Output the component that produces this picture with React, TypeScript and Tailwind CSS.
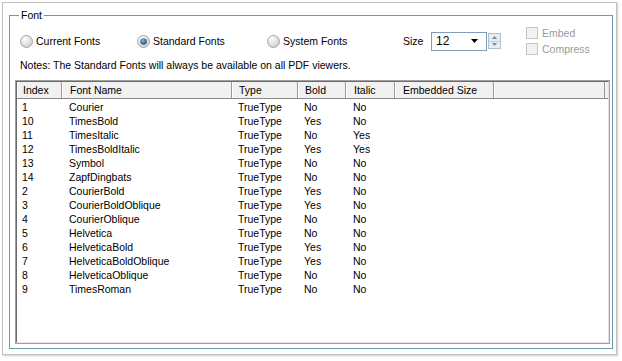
import React from "react";

const rows: [string, string, string, string, string][] = [
  ["1", "Courier", "TrueType", "No", "No"],
  ["10", "TimesBold", "TrueType", "Yes", "No"],
  ["11", "TimesItalic", "TrueType", "No", "Yes"],
  ["12", "TimesBoldItalic", "TrueType", "Yes", "Yes"],
  ["13", "Symbol", "TrueType", "No", "No"],
  ["14", "ZapfDingbats", "TrueType", "No", "No"],
  ["2", "CourierBold", "TrueType", "Yes", "No"],
  ["3", "CourierBoldOblique", "TrueType", "Yes", "No"],
  ["4", "CourierOblique", "TrueType", "No", "No"],
  ["5", "Helvetica", "TrueType", "No", "No"],
  ["6", "HelveticaBold", "TrueType", "Yes", "No"],
  ["7", "HelveticaBoldOblique", "TrueType", "Yes", "No"],
  ["8", "HelveticaOblique", "TrueType", "No", "No"],
  ["9", "TimesRoman", "TrueType", "No", "No"],
];

const cols = [
  { label: "Index", w: "w-[45px]", pl: "pl-[5px]" },
  { label: "Font Name", w: "w-[170px]", pl: "pl-[7px]" },
  { label: "Type", w: "w-[66px]", pl: "pl-[6px]" },
  { label: "Bold", w: "w-[48px]", pl: "pl-[6px]" },
  { label: "Italic", w: "w-[49px]", pl: "pl-[7px]" },
  { label: "Embedded Size", w: "w-[99px]", pl: "pl-[7px]" },
];

function Radio({ checked }: { checked?: boolean }) {
  return (
    <svg width="13" height="13" viewBox="0 0 13 13" className="shrink-0">
      <defs>
        <radialGradient id="rg" cx="0.35" cy="0.3" r="0.8">
          <stop offset="0" stopColor="#ffffff" />
          <stop offset="1" stopColor="#c8c8c8" />
        </radialGradient>
        <radialGradient id="dot" cx="0.4" cy="0.35" r="0.7">
          <stop offset="0" stopColor="#7fb4d8" />
          <stop offset="1" stopColor="#1f4f78" />
        </radialGradient>
      </defs>
      <circle cx="6.5" cy="6.5" r="6" fill="url(#rg)" stroke="#a6a6a6" />
      {checked && <circle cx="6.5" cy="6.5" r="3.3" fill="url(#dot)" />}
    </svg>
  );
}

function RadioItem({ label, w, checked }: { label: string; w: string; checked?: boolean }) {
  return (
    <div className={`flex items-center gap-[3px] ${w}`}>
      <Radio checked={checked} />
      <span>{label}</span>
    </div>
  );
}

function Check({ label }: { label: string }) {
  return (
    <div className="flex h-[16px] items-center gap-[4px] text-[#9a9a9a]">
      <div className="h-[12px] w-[12px] border border-[#c4c4c4] bg-[#f2f2f2]" />
      <span>{label}</span>
    </div>
  );
}

export default function App() {
  return (
    <div
      className="h-[361px] w-[622px] bg-white text-[10.5px] leading-[13px] text-black"
      style={{ fontFamily: '"Liberation Sans", Arial, sans-serif' }}
    >
      <div className="ml-[2px] mt-[2px] h-[353px] w-[615px] border border-[#c2c2c2] bg-white shadow-[1px_1px_2px_rgba(0,0,0,0.2)]">
        <div className="relative ml-[6px] mt-[12px] flex h-[334px] w-[604px] flex-col border border-[#6f98ac]">
          <span className="absolute left-[9px] top-[-7px] bg-white px-[2px]">Font</span>

          <div className="mt-[10px] flex h-[30px] items-center pl-[10px]">
            <RadioItem label="Current Fonts" w="w-[117px]" />
            <RadioItem label="Standard Fonts" w="w-[130px]" checked />
            <RadioItem label="System Fonts" w="w-[136px]" />
            <span className="w-[28px]">Size</span>
            <div className="flex h-[19px] w-[56px] items-center justify-between border border-[#7f9db9] bg-white pl-[4px] pr-[8px]">
              <span className="text-[12px]">12</span>
              <svg width="7" height="4" viewBox="0 0 7 4">
                <path d="M0 0h7L3.5 4z" fill="#000" />
              </svg>
            </div>
            <div className="ml-[1px] flex h-[16px] w-[13px] flex-col border border-[#b4c0cc] bg-[#e6ecf2]">
              <div className="flex flex-1 items-center justify-center border-b border-[#c4ced8]">
                <svg width="5" height="3" viewBox="0 0 5 3">
                  <path d="M0 3h5L2.5 0z" fill="#7a8a9a" />
                </svg>
              </div>
              <div className="flex flex-1 items-center justify-center">
                <svg width="5" height="3" viewBox="0 0 5 3">
                  <path d="M0 0h5L2.5 3z" fill="#7a8a9a" />
                </svg>
              </div>
            </div>
            <div className="ml-[25px] flex flex-col">
              <Check label="Embed" />
              <Check label="Compress" />
            </div>
          </div>

          <div className="mt-[2px] h-[14px] pl-[10px] leading-[14px]">
            Notes: The Standard Fonts will always be available on all PDF viewers.
          </div>

          <div className="ml-[5px] mt-[8px] h-[264px] w-[595px] border border-[#a0a0a0]">
            <div className="flex h-full flex-col border border-b-[#e4e4e4] border-l-[#6b6b6b] border-r-[#e4e4e4] border-t-[#6b6b6b] bg-white">
              <div className="flex h-[17px] border-b border-[#8a8a8a] bg-[#f1f1f1]">
                {cols.map((c) => (
                  <div
                    key={c.label}
                    className={`${c.w} ${c.pl} flex items-center border-l border-r border-l-white border-r-[#9a9a9a]`}
                  >
                    {c.label}
                  </div>
                ))}
                <div className="mr-[3px] flex-1 border-l border-r border-l-white border-r-[#9a9a9a]" />
              </div>
              <div className="pt-[1px]">
                {rows.map((r) => (
                  <div key={r[0]} className="flex h-[14px] items-center leading-[14px]">
                    {r.map((v, i) => (
                      <div key={i} className={`${cols[i].w} ${cols[i].pl} px-[1px]`}>
                        {v}
                      </div>
                    ))}
                  </div>
                ))}
              </div>
            </div>
          </div>
        </div>
      </div>
    </div>
  );
}
